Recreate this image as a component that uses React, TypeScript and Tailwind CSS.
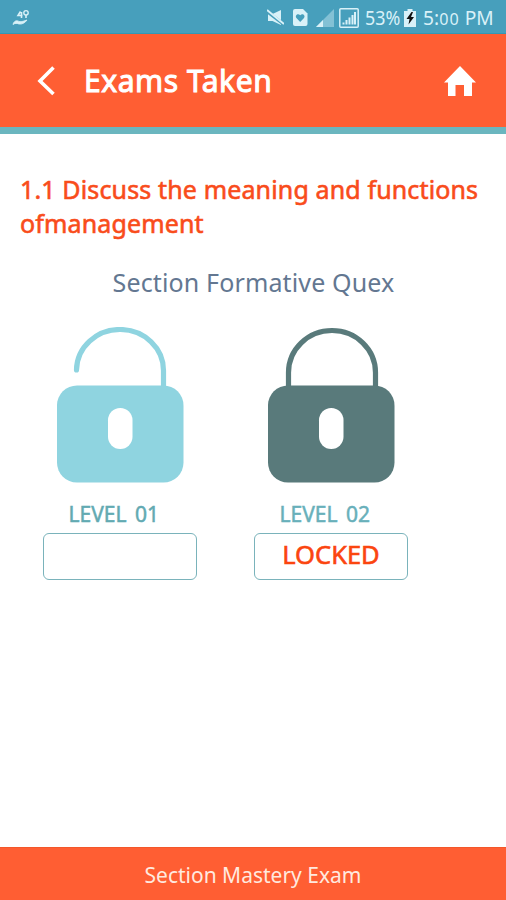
type Level = {
  label: string;
  status: string;
  color: string;
  labelColor: string;
  locked: boolean;
};

const LEVELS: Level[] = [
  { label: "LEVEL 01", status: "", color: "#8fd4e0", labelColor: "#62aab2", locked: false },
  { label: "LEVEL 02", status: "LOCKED", color: "#597a7b", labelColor: "#68b0ba", locked: true },
];

function Padlock({ color, locked }: { color: string; locked: boolean }) {
  return (
    <svg width="127" height="156" viewBox="0 0 127 156" className="ml-3.5" fill="none">
      <path
        d={locked ? "M20.5 60V45.5a43.5 42 0 0 1 87 0V60" : "M19.5 43a43.5 41 0 0 1 87 1V60"}
        stroke={color}
        strokeWidth="5.2"
        strokeLinecap="round"
      />
      <rect x="0" y="58.5" width="126.5" height="97" rx="20" fill={color} />
      <rect x="51" y="81" width="24.5" height="41" rx="12.2" fill="#fff" />
    </svg>
  );
}

function StatusBar() {
  return (
    <div className="h-[34px] pt-0.5 shrink-0 bg-[#479fbc] border-b border-[#3497b4] flex items-center text-[#d9f1f8]">
      <svg width="18" height="18" viewBox="0 0 18 18" className="ml-3" fill="none" stroke="currentColor">
        <path d="M1 15.500c1-4 4-4.500 6-3 3 .5 5-.5 8-1.500-2 3-5 4.500-8 4-2-.8-4-1-6 .5z" fill="currentColor" strokeWidth=".8" />
        <path d="M8.500 2.500 6 6.500h4.500M9.500 3v6" strokeWidth="1.600" />
        <circle cx="14" cy="3.800" r="2.200" strokeWidth="1.400" />
        <path d="M14 6v3" strokeWidth="1.600" />
      </svg>
      <div className="flex-1" />
      <svg width="17" height="17" viewBox="0 0 17 17" className="mr-[9px]">
        <path d="M1 5h4.500L14 1v15L5.500 12H1z" fill="currentColor" />
        <path d="M0 2.500l17 13" stroke="#479fbc" strokeWidth="3" />
        <path d="M0 1l17 14" stroke="currentColor" strokeWidth="2" />
      </svg>
      <svg width="15" height="17" viewBox="0 0 15 17" className="mr-[8px]">
        <path d="M2 0h8l4.500 4.500V15a2 2 0 0 1-2 2H2a2 2 0 0 1-2-2V2a2 2 0 0 1 2-2z" fill="currentColor" />
        <path d="M7.200 13 3.400 9C1.600 6.600 4.800 3.700 7.200 6.200c2.400-2.500 5.600.4 3.800 2.800z" fill="#479fbc" />
      </svg>
      <svg width="18" height="18" viewBox="0 0 18 18" className="mr-[5px]">
        <path d="M0 18 18 0v18z" fill="#83c1d5" />
        <path d="M0 18l7-7v7z" fill="currentColor" />
      </svg>
      <svg width="20" height="20" viewBox="0 0 20 20" className="mr-[6px]">
        <rect x=".8" y=".8" width="18.400" height="18.400" rx="1" fill="none" stroke="currentColor" strokeWidth="1.500" />
        <path d="M4.500 16.500v-2M7.500 16.500v-4.500M10.500 16.500V9.500M13.500 16.500V7M16 16.500V4" stroke="currentColor" strokeWidth="2" />
      </svg>
      <span className="pt-0.5 text-[19px] leading-none w-[36px] whitespace-nowrap">
        <span className="inline-block origin-left scale-x-[0.940]">53%</span>
      </span>
      <svg width="12" height="18" viewBox="0 0 12 18" className="ml-[3px] mr-[7px]">
        <path d="M3.500 0h5v2H12v16H0V2h3.500z" fill="currentColor" />
        <path d="M7.500 3 2.500 10h3l-1 5.500L10 8H7l2-5z" fill="#111" />
      </svg>
      <span className="pt-0.5 text-[19px] leading-none w-[72px] mr-[11px] whitespace-nowrap">
        <span className="inline-block origin-left scale-x-[1.010]">
          5:<span className="text-[16px] tracking-[1px]">00</span> PM
        </span>
      </span>
    </div>
  );
}

export default function App() {
  return (
    <div className="h-[900px] w-[506px] flex flex-col bg-white overflow-hidden font-['Noto_Sans',sans-serif]">
      <StatusBar />

      {/* Header */}
      <header className="h-[100px] shrink-0 bg-[#ff5e33] border-b-[7px] border-[#6bb6bf] flex items-center">
        <svg width="18" height="30" viewBox="0 0 18 30" className="ml-[37px]" fill="none">
          <path d="M16.500 1.500 3 15l13.500 13" stroke="#fff" strokeWidth="3.600" />
        </svg>
        <h1 className="ml-[29px] text-[30px] leading-none tracking-[0.550px] text-white [-webkit-text-stroke:1px_#fff] whitespace-nowrap">
          Exams Taken
        </h1>
        <svg width="32" height="30" viewBox="0 0 32 30" className="ml-auto mr-[30px]">
          <path d="M16 0 32 16.500h-4V30h-8V19h-8.500v11H4V16.500H0z" fill="#fff" />
        </svg>
      </header>

      <main className="flex-1">
        <h2 className="mt-[38px] ml-5 text-[25px] leading-[34px] tracking-[0.140px] text-[#f94c1b] [-webkit-text-stroke:0.600px_#f94c1b] whitespace-nowrap">
          1.1 Discuss the meaning and functions
          <br />
          ofmanagement
        </h2>
        <p className="mt-[25px] pl-px text-center text-[25px] leading-[34px] tracking-[0.140px] text-[#637791]">Section Formative Quex</p>

        {/* Levels */}
        <div className="mt-7 ml-[43px] flex gap-[57px]">
          {LEVELS.map(level => (
            <div key={level.label} className="w-[154px]">
              <Padlock color={level.color} locked={level.locked} />
              <div
                className="mt-4 mb-1 ml-[25.500px] text-[21px] leading-[30px] [word-spacing:3px] whitespace-nowrap [-webkit-text-stroke:0.500px]"
                style={{ color: level.labelColor }}
              >
                {level.label}
              </div>
              <div className="h-[47px] pb-1 rounded-[6px] border-[1.500px] border-[#7ab3bb] flex items-center justify-center text-[25.500px] leading-none text-[#fb450f] [-webkit-text-stroke:0.600px_#fb450f]">
                {level.status}
              </div>
            </div>
          ))}
        </div>
      </main>

      <footer className="h-[53px] pt-0.5 shrink-0 bg-[#ff5e33] border-t border-[#f3572a] flex items-center justify-center text-[21px] leading-none text-[#ffe9df]">
        Section Mastery Exam
      </footer>
    </div>
  );
}
